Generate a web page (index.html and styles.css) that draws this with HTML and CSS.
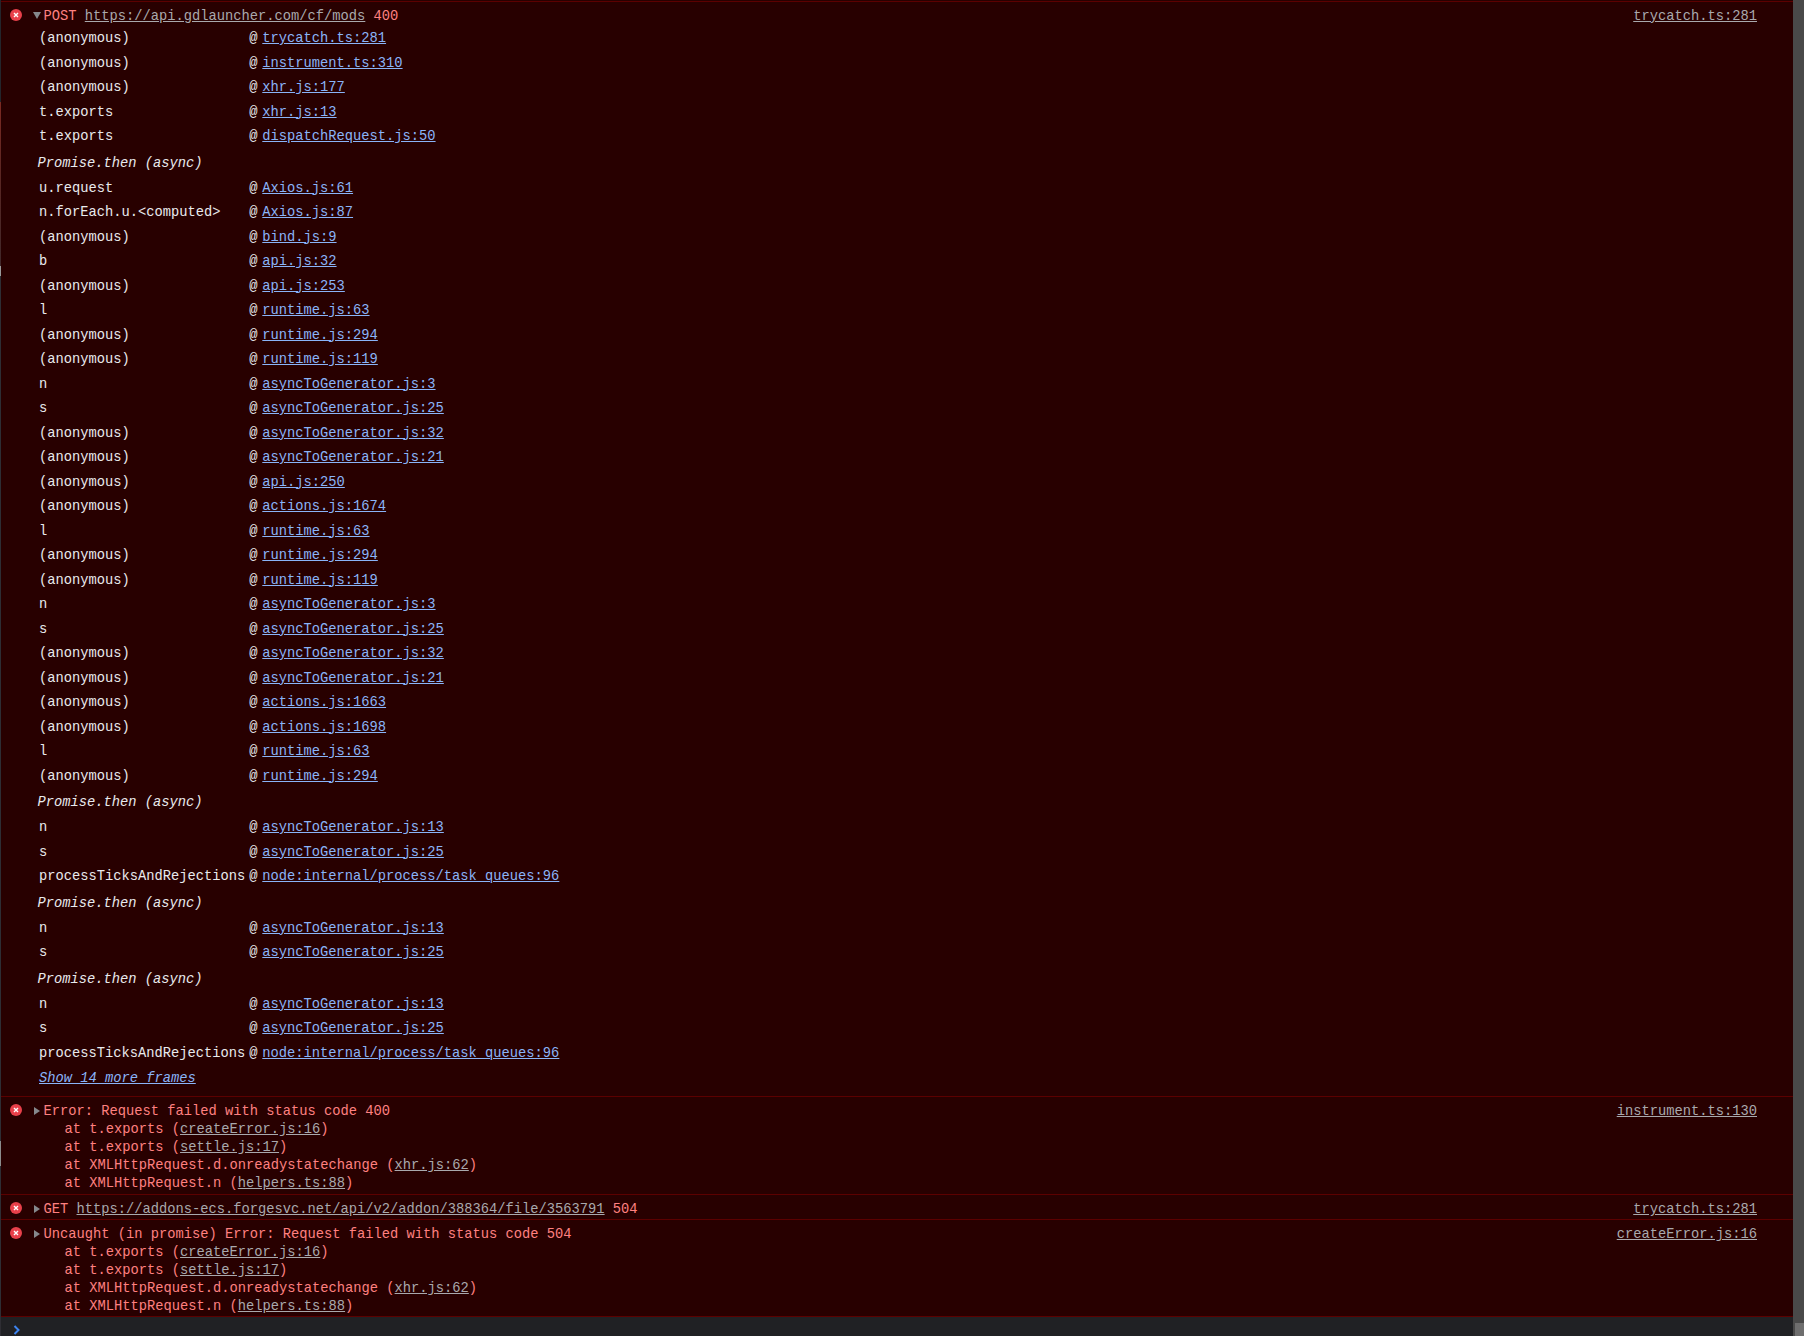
FILE: index.html
```html
<!DOCTYPE html>
<html lang="en">
<head>
<meta charset="utf-8">
<title>Console</title>
<link rel="stylesheet" href="styles.css">
</head>
<body>
<svg class="defs" width="0" height="0" aria-hidden="true">
  <symbol id="err" viewBox="0 0 12 12">
    <circle cx="6" cy="6" r="6" fill="#e8404a"/>
    <path d="M4 4l4 4M8 4l-4 4" stroke="#fff" stroke-width="1.4" fill="none"/>
  </symbol>
</svg>
<div class="devtools">
  <div class="edge"></div>
  <div class="panel">
    <main class="log">
      <section class="msg msg-first">
        <div class="head">
          <svg class="icon"><use href="#err"/></svg>
          <span class="tri tri-down"></span>
          <span class="text">POST <a class="url">https://api.gdlauncher.com/cf/mods</a> 400</span>
          <a class="src">trycatch.ts:281</a>
        </div>
        <div class="stack">
          <div class="fn">(anonymous)</div><div class="at">@</div><a class="loc">trycatch.ts:281</a>
          <div class="fn">(anonymous)</div><div class="at">@</div><a class="loc">instrument.ts:310</a>
          <div class="fn">(anonymous)</div><div class="at">@</div><a class="loc">xhr.js:177</a>
          <div class="fn">t.exports</div><div class="at">@</div><a class="loc">xhr.js:13</a>
          <div class="fn">t.exports</div><div class="at">@</div><a class="loc">dispatchRequest.js:50</a>
          <div class="async">Promise.then (async)</div>
          <div class="fn">u.request</div><div class="at">@</div><a class="loc">Axios.js:61</a>
          <div class="fn">n.forEach.u.&lt;computed&gt;</div><div class="at">@</div><a class="loc">Axios.js:87</a>
          <div class="fn">(anonymous)</div><div class="at">@</div><a class="loc">bind.js:9</a>
          <div class="fn">b</div><div class="at">@</div><a class="loc">api.js:32</a>
          <div class="fn">(anonymous)</div><div class="at">@</div><a class="loc">api.js:253</a>
          <div class="fn">l</div><div class="at">@</div><a class="loc">runtime.js:63</a>
          <div class="fn">(anonymous)</div><div class="at">@</div><a class="loc">runtime.js:294</a>
          <div class="fn">(anonymous)</div><div class="at">@</div><a class="loc">runtime.js:119</a>
          <div class="fn">n</div><div class="at">@</div><a class="loc">asyncToGenerator.js:3</a>
          <div class="fn">s</div><div class="at">@</div><a class="loc">asyncToGenerator.js:25</a>
          <div class="fn">(anonymous)</div><div class="at">@</div><a class="loc">asyncToGenerator.js:32</a>
          <div class="fn">(anonymous)</div><div class="at">@</div><a class="loc">asyncToGenerator.js:21</a>
          <div class="fn">(anonymous)</div><div class="at">@</div><a class="loc">api.js:250</a>
          <div class="fn">(anonymous)</div><div class="at">@</div><a class="loc">actions.js:1674</a>
          <div class="fn">l</div><div class="at">@</div><a class="loc">runtime.js:63</a>
          <div class="fn">(anonymous)</div><div class="at">@</div><a class="loc">runtime.js:294</a>
          <div class="fn">(anonymous)</div><div class="at">@</div><a class="loc">runtime.js:119</a>
          <div class="fn">n</div><div class="at">@</div><a class="loc">asyncToGenerator.js:3</a>
          <div class="fn">s</div><div class="at">@</div><a class="loc">asyncToGenerator.js:25</a>
          <div class="fn">(anonymous)</div><div class="at">@</div><a class="loc">asyncToGenerator.js:32</a>
          <div class="fn">(anonymous)</div><div class="at">@</div><a class="loc">asyncToGenerator.js:21</a>
          <div class="fn">(anonymous)</div><div class="at">@</div><a class="loc">actions.js:1663</a>
          <div class="fn">(anonymous)</div><div class="at">@</div><a class="loc">actions.js:1698</a>
          <div class="fn">l</div><div class="at">@</div><a class="loc">runtime.js:63</a>
          <div class="fn">(anonymous)</div><div class="at">@</div><a class="loc">runtime.js:294</a>
          <div class="async">Promise.then (async)</div>
          <div class="fn">n</div><div class="at">@</div><a class="loc">asyncToGenerator.js:13</a>
          <div class="fn">s</div><div class="at">@</div><a class="loc">asyncToGenerator.js:25</a>
          <div class="fn">processTicksAndRejections</div><div class="at">@</div><a class="loc">node:internal/process/task_queues:96</a>
          <div class="async">Promise.then (async)</div>
          <div class="fn">n</div><div class="at">@</div><a class="loc">asyncToGenerator.js:13</a>
          <div class="fn">s</div><div class="at">@</div><a class="loc">asyncToGenerator.js:25</a>
          <div class="async">Promise.then (async)</div>
          <div class="fn">n</div><div class="at">@</div><a class="loc">asyncToGenerator.js:13</a>
          <div class="fn">s</div><div class="at">@</div><a class="loc">asyncToGenerator.js:25</a>
          <div class="fn">processTicksAndRejections</div><div class="at">@</div><a class="loc">node:internal/process/task_queues:96</a>
          <a class="more">Show 14 more frames</a>
        </div>
      </section>
      <section class="msg msg-err">
        <div class="head">
          <svg class="icon"><use href="#err"/></svg>
          <span class="tri tri-right"></span>
          <span class="text">Error: Request failed with status code 400</span>
          <a class="src">instrument.ts:130</a>
        </div>
        <div class="trace">at t.exports (<a class="url">createError.js:16</a>)</div>
        <div class="trace">at t.exports (<a class="url">settle.js:17</a>)</div>
        <div class="trace">at XMLHttpRequest.d.onreadystatechange (<a class="url">xhr.js:62</a>)</div>
        <div class="trace">at XMLHttpRequest.n (<a class="url">helpers.ts:88</a>)</div>
      </section>
      <section class="msg msg-get">
        <div class="head">
          <svg class="icon"><use href="#err"/></svg>
          <span class="tri tri-right"></span>
          <span class="text">GET <a class="url">https://addons-ecs.forgesvc.net/api/v2/addon/388364/file/3563791</a> 504</span>
          <a class="src">trycatch.ts:281</a>
        </div>
      </section>
      <section class="msg msg-unc">
        <div class="head">
          <svg class="icon"><use href="#err"/></svg>
          <span class="tri tri-right"></span>
          <span class="text">Uncaught (in promise) Error: Request failed with status code 504</span>
          <a class="src">createError.js:16</a>
        </div>
        <div class="trace">at t.exports (<a class="url">createError.js:16</a>)</div>
        <div class="trace">at t.exports (<a class="url">settle.js:17</a>)</div>
        <div class="trace">at XMLHttpRequest.d.onreadystatechange (<a class="url">xhr.js:62</a>)</div>
        <div class="trace">at XMLHttpRequest.n (<a class="url">helpers.ts:88</a>)</div>
      </section>
    </main>
    <div class="prompt">
      <svg class="chev" width="8" height="10" viewBox="0 0 8 10"><path d="M1.5 1l4 4-4 4" stroke="#3d84f0" stroke-width="2" fill="none"/></svg>
    </div>
  </div>
  <aside class="scrollbar"><div class="thumb"></div></aside>
</div>
</body>
</html>
```
FILE: styles.css
```css
* { box-sizing: border-box; }
html, body { margin: 0; padding: 0; height: 100%; }
body {
  background: #280000;
  color: #e8eaed;
  font-family: "Liberation Mono", "DejaVu Sans Mono", monospace;
  font-size: 13.75px;
  overflow: hidden;
}
.defs { position: absolute; }
.devtools { display: flex; height: 1336px; }
.edge {
  flex: none;
  width: 1px;
  background: linear-gradient(to bottom,
    #24262c 0, #24262c 102px,
    #7c2a22 102px, #5a2622 175px, #40282a 266px,
    #9a9a9a 266px, #9a9a9a 276px,
    #2e2e34 276px, #2e2e34 1141px,
    #8c8c8c 1141px, #8c8c8c 1166px,
    #2e2e34 1166px, #2e2e34 100%);
}
.panel {
  flex: 1;
  min-width: 0;
  display: flex;
  flex-direction: column;
}
.log { flex: 1; min-height: 0; background: #280000; }
.msg { border-bottom: 1px solid #5c0000; }
.msg-first { border-top: 1px solid #5c0000; margin-top: 1px; height: 1096px; }
.msg-err { height: 98px; padding-top: 6px; }
.msg-get { height: 25px; padding-top: 6px; }
.msg-unc { height: 97px; padding-top: 6px; }
.msg-first .head { margin-top: 5.5px; }
.head {
  display: flex;
  align-items: center;
  height: 18px;
  line-height: 18px;
  color: #ff8080;
  position: relative;
  padding-left: 42.5px;
  padding-right: 36px;
}
.icon {
  position: absolute;
  left: 9px;
  top: 1px;
  width: 12px;
  height: 12px;
}
.tri { position: absolute; width: 0; height: 0; }
.tri-down {
  left: 31.7px;
  top: 4.5px;
  border-left: 4px solid transparent;
  border-right: 4px solid transparent;
  border-top: 7px solid #85888c;
}
.tri-right {
  left: 33px;
  top: 4px;
  border-top: 4px solid transparent;
  border-bottom: 4px solid transparent;
  border-left: 6px solid #85888c;
}
.text { flex: 1; white-space: pre; }
.url { color: #a9a9ad; text-decoration: underline; }
.src { color: #a9a9ad; text-decoration: underline; }
.trace {
  color: #ff8080;
  height: 18px;
  line-height: 18px;
  padding-left: 63.5px;
  white-space: pre;
}
.stack {
  display: grid;
  grid-template-columns: max-content max-content 1fr;
  padding-left: 38px;
  padding-top: 1.5px;
  line-height: 24.5px;
}
.fn { height: 24.5px; padding-right: 4px; white-space: pre; }
.at { height: 24.5px; width: 13px; color: #e8eaed; }
.loc {
  height: 24.5px;
  color: #8ab4f8;
  text-decoration: underline;
  justify-self: start;
}
.async {
  grid-column: 1 / -1;
  height: 27px;
  line-height: 27px;
  font-style: italic;
  margin-left: -1.5px;
}
.more {
  grid-column: 1 / -1;
  height: 25px;
  line-height: 25px;
  font-style: italic;
  color: #8ab4f8;
  text-decoration: underline;
  justify-self: start;
}
.prompt {
  height: 19px;
  flex: none;
  background: #202124;
  padding-left: 12px;
  padding-top: 8px;
}
.chev { display: block; }
.scrollbar {
  flex: none;
  width: 11px;
  background: #494949;
  display: flex;
  flex-direction: column;
  justify-content: flex-end;
  align-items: flex-end;
}
.thumb { width: 9px; height: 13px; background: #6e6e6e; }
```
